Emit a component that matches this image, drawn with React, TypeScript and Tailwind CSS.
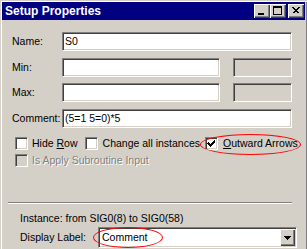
const sunken =
  "border border-t-[#808080] border-l-[#808080] border-b-white border-r-white shadow-[inset_1px_1px_0_#404040,inset_-1px_-1px_0_#d4d0c8]";
const raised =
  "bg-[#d4d0c8] shadow-[inset_1px_1px_0_#ffffff,inset_-1px_-1px_0_#404040,inset_-2px_-2px_0_#808080]";

function CaptionButton({ kind }: { kind: "min" | "max" | "close" }) {
  return (
    <div className={`w-[16px] h-[14px] flex items-center justify-center ${raised}`}>
      <svg width="16" height="14" viewBox="0 0 16 14" shapeRendering="crispEdges">
        {kind === "min" && <rect x="4" y="9" width="6" height="2" fill="#000" />}
        {kind === "max" && (
          <>
            <rect x="3.5" y="2.5" width="8" height="8" fill="none" stroke="#000" />
            <rect x="3" y="3" width="9" height="1" fill="#000" />
          </>
        )}
        {kind === "close" && (
          <path d="M4.5 3.5 L10.5 9.5 M10.5 3.5 L4.5 9.5 M5.5 3.5 L11.5 9.5 M11.5 3.5 L5.5 9.5" stroke="#000" strokeWidth="1" fill="none" />
        )}
      </svg>
    </div>
  );
}

function Field({ value, w, disabled }: { value?: string; w: string; disabled?: boolean }) {
  return (
    <div
      className={`${w} h-[19px] shrink-0 ${sunken} ${disabled ? "bg-[#d4d0c8]" : "bg-white"} flex items-center pl-[2px] leading-none whitespace-nowrap`}
    >
      {value}
    </div>
  );
}

function Check({ checked, disabled }: { checked?: boolean; disabled?: boolean }) {
  return (
    <div
      className={`w-[13px] h-[13px] shrink-0 ${sunken} ${disabled ? "bg-[#d4d0c8]" : "bg-white"} flex items-center justify-center`}
    >
      {checked && (
        <svg width="9" height="9" viewBox="0 0 9 9" shapeRendering="crispEdges">
          <path d="M1 3h1v1h1v1h1v-1h1v-1h1v-1h1v-1h1v3h-1v1h-1v1h-1v1h-1v1h-1v-1h-1v-1h-1v-1h-1z" fill="#000" />
        </svg>
      )}
    </div>
  );
}

function Row({ label, children, mt }: { label: string; children: React.ReactNode; mt: string }) {
  return (
    <div className={`flex items-center ${mt}`}>
      <span className="w-[50px] shrink-0">{label}</span>
      {children}
    </div>
  );
}

export default function App() {
  return (
    <div className="relative w-[307px] h-[249px] overflow-hidden bg-[#d4d0c8] text-black text-[10.5px] font-['Liberation_Sans',Arial,sans-serif] pl-[2px] pt-[2px] pr-[2px] shadow-[inset_1px_1px_0_#d4d0c8,inset_2px_2px_0_#ffffff,inset_-1px_0_0_#808080]">
      <div className="h-[18px] bg-[#000080] flex items-center pl-[3px] pr-[1px]">
        <span className="text-white font-bold text-[12px] leading-none">Setup Properties</span>
        <div className="ml-auto flex">
          <CaptionButton kind="min" />
          <CaptionButton kind="max" />
          <div className="w-[2px]" />
          <CaptionButton kind="close" />
        </div>
      </div>

      <div className="pl-[10px] flex flex-col whitespace-nowrap">
        <Row label="Name:" mt="mt-[12px]">
          <Field value="S0" w="w-[230px]" />
        </Row>
        <Row label="Min:" mt="mt-[7px]">
          <Field w="w-[158px]" />
          <div className="ml-[13px]">
            <Field w="w-[59px]" disabled />
          </div>
        </Row>
        <Row label="Max:" mt="mt-[6px]">
          <Field w="w-[158px]" />
          <div className="ml-[13px]">
            <Field w="w-[59px]" disabled />
          </div>
        </Row>
        <Row label="Comment:" mt="mt-[7px]">
          <Field value="(5=1 5=0)*5" w="w-[230px]" />
        </Row>

        <div className="flex items-center mt-[9px] ml-[3px] h-[13px]">
          <Check />
          <span className="ml-[4px] shrink-0">
            Hide <span className="underline">R</span>ow
          </span>
          <div className="ml-[7px] shrink-0">
            <Check />
          </div>
          <span className="ml-[5px] shrink-0">Change all instances</span>
          <div className="ml-[5px] shrink-0">
            <Check checked />
          </div>
          <span className="ml-[5px] shrink-0">
            <span className="underline">O</span>utward Arrows
          </span>
        </div>

        <div className="flex items-center mt-[4px] ml-[3px] h-[13px]">
          <Check disabled />
          <span className="ml-[4px] shrink-0 text-[#808080] [text-shadow:1px_1px_0_#ffffff]">
            Is Apply Subroutine Input
          </span>
        </div>

        <div className="mt-[35px] -ml-[4px] w-[284px] h-[2px] border-t border-t-[#808080] border-b border-b-white" />

        <div className="mt-[8px] ml-[8px] h-[13px] leading-[13px]">
          Instance: from SIG0(8) to SIG0(58)
        </div>

        <div className="flex items-center mt-[2px] ml-[8px]">
          <span className="w-[78px] shrink-0">Display Label:</span>
          <div className={`w-[199px] h-[21px] shrink-0 bg-white ${sunken} flex items-center pl-[3px]`}>
            <span>Comment</span>
            <div className={`ml-auto mr-[1px] w-[15px] h-[17px] flex items-center justify-center ${raised}`}>
              <svg width="7" height="4" viewBox="0 0 7 4" shapeRendering="crispEdges">
                <path d="M0 0h7v1h-1v1h-1v1h-1v1h-1v-1h-1v-1h-1v-1h-1z" fill="#000" />
              </svg>
            </div>
          </div>
        </div>
      </div>

      <div className="absolute left-[200px] top-[134px] w-[101px] h-[21px] rounded-[50%] border border-[#ff0000]" />
      <div className="absolute left-[93px] top-[227px] w-[70px] h-[21px] rounded-[50%] border border-[#ff0000]" />
    </div>
  );
}
